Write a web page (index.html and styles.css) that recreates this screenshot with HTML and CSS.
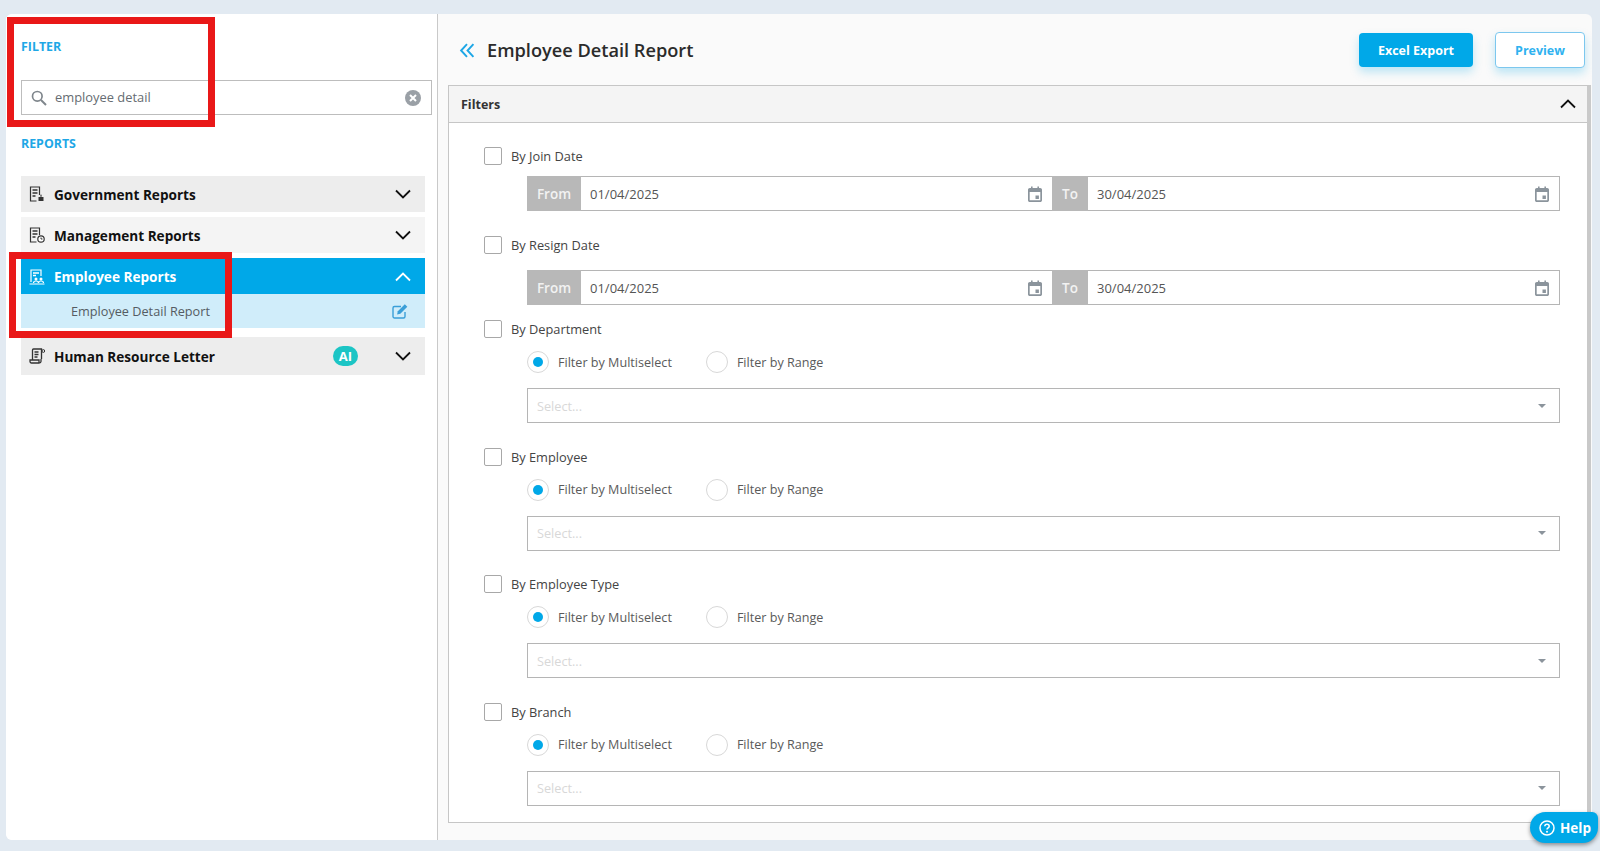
FILE: index.html
```html
<!DOCTYPE html>
<html lang="en">
<head>
<meta charset="utf-8">
<title>Employee Detail Report</title>
<link rel="stylesheet" href="styles.css">
</head>
<body>
<svg class="defs" width="0" height="0" aria-hidden="true">
  <symbol id="cal" viewBox="0 0 16 16"><path fill="currentColor" d="M4 0.5h1.6v1.5h4.8V0.5H12V2h1.2C14.2 2 15 2.8 15 3.8v10.4c0 1-.8 1.8-1.8 1.8H2.8C1.8 16 1 15.2 1 14.2V3.8C1 2.8 1.8 2 2.8 2H4V0.5zM2.7 6v8.3h10.6V6H2.7zM8.5 9.5h3.4v3.4H8.5z"/></symbol>
  <symbol id="chev-d" viewBox="0 0 16 10"><path fill="none" stroke="currentColor" stroke-width="1.8" d="M1 1.500l7 7 7-7"/></symbol>
  <symbol id="chev-u" viewBox="0 0 16 10"><path fill="none" stroke="currentColor" stroke-width="1.8" d="M1 8.500l7-7 7 7"/></symbol>
</svg>
<main class="card">
  <aside class="sidebar">
    <h2 class="side-title">FILTER</h2>
    <div class="search">
      <svg class="search-icon" viewBox="0 0 16 16"><circle cx="6.300" cy="6.300" r="4.800" fill="none" stroke="currentColor" stroke-width="1.700"/><path d="M10 10l5 5" stroke="currentColor" stroke-width="2"/></svg>
      <span class="search-text">employee detail</span>
      <svg class="search-clear" viewBox="0 0 16 16"><circle cx="8" cy="8" r="8" fill="currentColor"/><path d="M5 5l6 6M11 5l-6 6" stroke="#fff" stroke-width="2"/></svg>
    </div>
    <h2 class="side-title reports">REPORTS</h2>
    <div class="acc acc-gov">
      <svg class="acc-icon" viewBox="0 0 16 16"><path fill="none" stroke="currentColor" stroke-width="1.200" d="M10.500 9V1H1.500v14h6"/><path stroke="currentColor" stroke-width="1.500" d="M3.500 4h5M3.500 7h5M3.500 10h3"/><path fill="currentColor" d="M12 8l1 2.500h-2zM9.500 11h5v4h-5z"/></svg>
      <span class="acc-label">Government Reports</span>
      <svg class="chev"><use href="#chev-d"/></svg>
    </div>
    <div class="acc acc-mgmt">
      <svg class="acc-icon" viewBox="0 0 16 16"><path fill="none" stroke="currentColor" stroke-width="1.200" d="M10.500 8V1H1.500v14h6"/><path stroke="currentColor" stroke-width="1.500" d="M3.500 4h5M3.500 7h5M3.500 10h3"/><circle cx="12" cy="12" r="3.200" fill="#fff" stroke="currentColor" stroke-width="1.200"/><path stroke="currentColor" fill="none" d="M12 10.500V12h1.500"/></svg>
      <span class="acc-label">Management Reports</span>
      <svg class="chev"><use href="#chev-d"/></svg>
    </div>
    <div class="acc acc-active">
      <svg class="acc-icon" viewBox="0 0 16 16"><path fill="none" stroke="currentColor" stroke-width="1.200" d="M2 13V1h10v6"/><path stroke="currentColor" stroke-width="1.300" d="M4 4h6M4 6.500h3"/><circle cx="7" cy="10" r="1.500" fill="currentColor"/><circle cx="12" cy="10" r="1.500" fill="currentColor"/><path fill="none" stroke="currentColor" stroke-width="1.200" d="M0.500 15h15M4.500 14c0-1.500 1-2 2.500-2s2.500.5 2.500 2M9.500 14c0-1.500 1-2 2.500-2s2.500.5 2.500 2"/></svg>
      <span class="acc-label">Employee Reports</span>
      <svg class="chev"><use href="#chev-u"/></svg>
    </div>
    <div class="sub">
      <span class="sub-label">Employee Detail Report</span>
      <svg class="sub-edit" viewBox="0 0 18 16"><path fill="none" stroke="currentColor" stroke-width="1.400" d="M14 9v4.500c0 .8-.7 1.500-1.500 1.500h-9C2.700 15 2 14.300 2 13.500V5c0-.8.7-1.500 1.500-1.500H10"/><path fill="currentColor" d="M13.800 1.200l2.500 2.500-7 7-3.200.7.700-3.200z"/></svg>
    </div>
    <div class="acc acc-hr">
      <svg class="acc-icon" viewBox="0 0 16 16"><path fill="none" stroke="currentColor" stroke-width="1.300" d="M3.500 12V2c0-.6.400-1 1-1h8v10M1 12h9v3H2.500C1.600 15 1 14.300 1 13.500zM10 12v3c1 0 2-.6 2-1.500V11"/><path stroke="currentColor" stroke-width="1.300" d="M5.500 4h4M5.500 6.500h4M5.500 9h3"/><circle cx="14.300" cy="3" r="1.400" fill="none" stroke="currentColor"/></svg>
      <span class="acc-label">Human Resource Letter</span>
      <span class="ai">AI</span>
      <svg class="chev"><use href="#chev-d"/></svg>
    </div>
  </aside>

  <section class="content">
    <header class="topbar">
      <svg class="back" viewBox="0 0 14 14"><path fill="none" stroke="currentColor" stroke-width="1.800" d="M7 1L1.500 7 7 13M13 1L7.500 7 13 13"/></svg>
      <h1 class="title">Employee Detail Report</h1>
      <button class="btn btn-primary">Excel Export</button>
      <button class="btn btn-outline">Preview</button>
    </header>

    <div class="panel">
      <div class="panel-head">
        <span class="panel-title">Filters</span>
        <svg class="chev chev-panel"><use href="#chev-u"/></svg>
      </div>
      <div class="panel-body">
        <div class="check-row first"><span class="box"></span><span class="check-label">By Join Date</span></div>
        <div class="dates">
          <span class="addon addon-from">From</span>
          <span class="date-field"><span>01/04/2025</span><svg class="cal"><use href="#cal"/></svg></span>
          <span class="addon addon-to">To</span>
          <span class="date-field"><span>30/04/2025</span><svg class="cal"><use href="#cal"/></svg></span>
        </div>
        <div class="check-row resign"><span class="box"></span><span class="check-label">By Resign Date</span></div>
        <div class="dates dates-resign">
          <span class="addon addon-from">From</span>
          <span class="date-field"><span>01/04/2025</span><svg class="cal"><use href="#cal"/></svg></span>
          <span class="addon addon-to">To</span>
          <span class="date-field"><span>30/04/2025</span><svg class="cal"><use href="#cal"/></svg></span>
        </div>

        <div class="check-row dept"><span class="box"></span><span class="check-label">By Department</span></div>
        <div class="radios"><span class="radio on"></span><span class="radio-label">Filter by Multiselect</span><span class="radio"></span><span class="radio-label">Filter by Range</span></div>
        <div class="select"><span>Select...</span><i class="caret"></i></div>

        <div class="check-row group"><span class="box"></span><span class="check-label">By Employee</span></div>
        <div class="radios"><span class="radio on"></span><span class="radio-label">Filter by Multiselect</span><span class="radio"></span><span class="radio-label">Filter by Range</span></div>
        <div class="select"><span>Select...</span><i class="caret"></i></div>

        <div class="check-row group"><span class="box"></span><span class="check-label">By Employee Type</span></div>
        <div class="radios"><span class="radio on"></span><span class="radio-label">Filter by Multiselect</span><span class="radio"></span><span class="radio-label">Filter by Range</span></div>
        <div class="select"><span>Select...</span><i class="caret"></i></div>

        <div class="check-row group"><span class="box"></span><span class="check-label">By Branch</span></div>
        <div class="radios"><span class="radio on"></span><span class="radio-label">Filter by Multiselect</span><span class="radio"></span><span class="radio-label">Filter by Range</span></div>
        <div class="select"><span>Select...</span><i class="caret"></i></div>
      </div>
    </div>
  </section>
</main>
<div class="mark mark-filter"></div>
<div class="mark mark-emp"></div>
<div class="help">
  <svg class="help-icon" viewBox="0 0 16 16"><circle cx="8" cy="8" r="7" fill="none" stroke="currentColor" stroke-width="1.500"/><path fill="none" stroke="currentColor" stroke-width="1.500" d="M5.800 6.200C5.900 5 6.800 4.300 8 4.300c1.300 0 2.200.8 2.200 1.900 0 1.700-2.200 1.600-2.200 3.400"/><circle cx="8" cy="11.700" r="1" fill="currentColor"/></svg>
  <span>Help</span>
</div>
</body>
</html>
```
FILE: styles.css
```css
* { box-sizing: border-box; }
html, body { height: 100%; }
body {
  margin: 0;
  height: 851px;
  overflow: hidden;
  background: #e2eaf2;
  padding: 14px 8px 11px 6px;
  font-family: "Open Sans", "Noto Sans", sans-serif;
  color: #444;
  position: relative;
}
.defs { position: absolute; }
.card {
  display: flex;
  height: 826px;
  background: #fafafa;
  border-radius: 6px;
  overflow: hidden;
}
.sidebar {
  width: 432px;
  flex: none;
  background: #fff;
  border-right: 1px solid #c9c9c9;
  padding: 0 0 0 15px;
}
.side-title {
  margin: 0;
  padding-top: 25px;
  font-size: 12.400px;
  line-height: 16px;
  font-weight: 700;
  color: #1ea7e6;
}
.search {
  display: flex;
  align-items: center;
  width: 411px;
  height: 35px;
  margin-top: 25px;
  border: 1px solid #bdbdbd;
  padding: 0 10px 0 9px;
}
.search-icon { width: 16px; height: 16px; color: #7f868c; flex: none; }
.search-text { font-size: 12.900px; color: #666c72; margin-left: 8px; flex: 1; padding-bottom: 2px; }
.search-clear { width: 16px; height: 16px; color: #9aa0a6; flex: none; }
.side-title.reports { padding-top: 21px; }
.acc {
  display: flex;
  align-items: center;
  width: 404px;
  height: 36px;
  background: #ededed;
  padding: 0 14px 0 8px;
  color: #111;
}
.acc-gov { margin-top: 24px; }
.acc-mgmt { margin-top: 5px; background: #f4f4f4; }
.acc-active { margin-top: 5px; background: #00a8e8; color: #fff; padding-top: 1px; }
.acc-hr { margin-top: 9px; height: 38px; }
.acc-icon { width: 16px; height: 16px; flex: none; color: #333; }
.acc-active .acc-icon { color: #fff; }
.acc-label {
  margin-left: 9px;
  flex: 1;
  font-size: 13.600px;
  font-weight: 700;
}
.chev { width: 16px; height: 10px; flex: none; color: #111; }
.acc-active .chev { color: #fff; }
.ai {
  width: 25px;
  height: 20px;
  border-radius: 10px;
  background: #1cc5c5;
  color: #fff;
  font-size: 13px;
  font-weight: 700;
  line-height: 20px;
  text-align: center;
  margin-right: 37px;
}
.sub {
  display: flex;
  align-items: center;
  width: 404px;
  height: 34px;
  background: #d0edfa;
  padding: 0 16px 0 50px;
}
.sub-label { flex: 1; font-size: 12.700px; color: #555c63; }
.sub-edit { width: 18px; height: 16px; color: #3a9fd8; }

.content { flex: 1; min-width: 0; padding: 0 1px 0 10px; display: flex; flex-direction: column; }
.topbar {
  display: flex;
  align-items: center;
  height: 71px;
  flex: none;
  padding: 1px 6px 0 11px;
}
.back { width: 16px; height: 15px; color: #1ea7e6; flex: none; }
.title {
  margin: 0 0 0 12px;
  flex: 1;
  font-size: 18.200px;
  font-weight: 600;
  color: #2b2b2b;
}
.btn {
  font-family: inherit;
  font-size: 12.500px;
  font-weight: 700;
  border-radius: 4px;
  padding: 0;
  box-shadow: 0 5px 10px rgba(0, 168, 232, 0.25);
}
.btn-primary {
  width: 114px;
  height: 34px;
  background: #00a8e8;
  color: #fff;
  border: 0;
}
.btn-outline {
  width: 90px;
  height: 36px;
  margin-left: 22px;
  background: #fff;
  color: #2fb2f0;
  border: 1px solid #7cc7ee;
}
.panel {
  height: 738px;
  flex: none;
  border: 1px solid #c6c6c6;
  border-right: 4px solid #c9c9c9;
  background: #fff;
}
.panel-head {
  display: flex;
  align-items: center;
  justify-content: space-between;
  height: 37px;
  background: #f4f4f4;
  border-bottom: 1px solid #c6c6c6;
  padding: 0 11px 0 12px;
}
.panel-title { font-size: 12.500px; font-weight: 700; color: #333; }
.panel-body { padding: 0 27px 0 35px; }
.check-row { display: flex; align-items: center; height: 18px; }
.check-row.first { margin-top: 24px; }
.check-row.resign { margin-top: 25px; }
.check-row.dept { margin-top: 15px; }
.check-row.group { margin-top: 24.600px; }
.box {
  width: 18px;
  height: 18px;
  border: 1px solid #a8a8a8;
  border-radius: 2px;
  background: #fff;
  flex: none;
}
.check-label { margin-left: 9px; font-size: 12.800px; font-weight: 500; color: #444; }
.dates {
  display: flex;
  height: 35px;
  margin: 11px 0 0 43px;
  border: 1px solid #b5b5b5;
  background: #fff;
}
.dates-resign { margin-top: 16px; }
.addon {
  display: flex;
  align-items: center;
  justify-content: center;
  flex: none;
  background: #b8b8b8;
  color: #f2f2f2;
  font-size: 13.500px;
  font-weight: 600;
  margin: -1px 0;
}
.addon-from { width: 54px; margin-left: -1px; }
.addon-to { width: 36px; }
.date-field {
  flex: 1;
  display: flex;
  align-items: center;
  justify-content: space-between;
  padding: 0 9px 0 9px;
  font-size: 13px;
  color: #555;
}
.cal { width: 16px; height: 16px; color: #8b949c; }
.radios {
  display: flex;
  align-items: center;
  height: 22px;
  margin: 13px 0 0 43px;
}
.radio {
  width: 22px;
  height: 22px;
  border-radius: 50%;
  border: 1.500px solid #d8d8d8;
  background: #fff;
  flex: none;
  display: flex;
  align-items: center;
  justify-content: center;
}
.radio.on::after {
  content: "";
  width: 10px;
  height: 10px;
  border-radius: 50%;
  background: #00a8e8;
}
.radio-label { margin-left: 9px; margin-right: 34px; font-size: 12.600px; color: #5a5a5a; }
.select {
  display: flex;
  align-items: center;
  justify-content: space-between;
  height: 35px;
  margin: 15px 0 0 43px;
  border: 1px solid #b5b5b5;
  padding: 0 13px 0 9px;
  font-size: 12.700px;
  color: #d8d8d8;
}
.caret {
  width: 0;
  height: 0;
  border-left: 4px solid transparent;
  border-right: 4px solid transparent;
  border-top: 4px solid #8b949c;
}

.mark { position: absolute; border: 7px solid #e91818; pointer-events: none; }
.mark-filter { left: 7px; top: 17px; width: 208px; height: 110px; }
.mark-emp { left: 9px; top: 252px; width: 223px; height: 86px; }
.help {
  position: absolute;
  left: 1530px;
  top: 812px;
  width: 68px;
  height: 31px;
  border-radius: 16px 6px 16px 16px;
  background: #00a8e8;
  color: #fff;
  display: flex;
  align-items: center;
  padding-left: 9px;
  font-size: 13.500px;
  font-weight: 700;
  box-shadow: 0 2px 4px rgba(0, 0, 0, 0.4);
}
.help-icon { width: 16px; height: 16px; margin-right: 5px; }
```
